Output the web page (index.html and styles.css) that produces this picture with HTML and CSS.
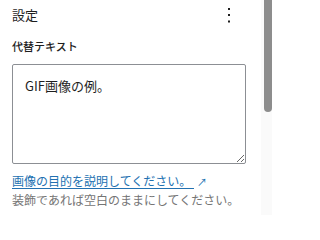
FILE: index.html
```html
<!DOCTYPE html>
<html lang="ja">
<head>
<meta charset="utf-8">
<link rel="stylesheet" href="styles.css">
</head>
<body>
<div class="frame">
  <div class="panel">
    <div class="panel-header">
      <h2 class="panel-title">設定</h2>
      <span class="menu-btn" aria-label="オプション">
        <svg width="4" height="16" viewBox="0 0 4 16"><rect x="1" y="1" width="2" height="2" fill="#1e1e1e"/><rect x="1" y="7" width="2" height="2" fill="#1e1e1e"/><rect x="1" y="13.5" width="2" height="2" fill="#1e1e1e"/></svg>
      </span>
    </div>
    <label class="field-label">代替テキスト</label>
    <textarea class="field-input">GIF画像の例。</textarea>
    <p class="help">
      <a class="help-link" href="#">画像の目的を説明してください。 </a><span class="ext">↗</span><br>
      <span class="help-text">装飾であれば空白のままにしてください。</span>
    </p>
  </div>
  <div class="scroll-track"><div class="scroll-thumb"></div></div>
</div>
</body>
</html>
```
FILE: styles.css
```css
html, body {
  margin: 0;
  padding: 0;
  background: #ffffff;
}
body {
  font-family: "Noto Sans CJK JP", "Noto Sans", sans-serif;
  color: #1e1e1e;
  width: 272px;
  height: 215px;
  overflow: hidden;
}
.frame {
  display: flex;
  height: 215px;
}
.panel {
  flex: 1;
  padding: 0 16px 0 12px;
  min-width: 0;
}
.panel-header {
  display: flex;
  justify-content: space-between;
  align-items: center;
  height: 30px;
}
.panel-title {
  margin: 0;
  font-size: 13px;
  font-weight: 400;
  line-height: 30px;
}
.menu-btn {
  display: flex;
  width: 4px;
  height: 16px;
  margin-right: 14px;
}
.field-label {
  display: block;
  margin-top: 8px;
  font-size: 11px;
  font-weight: 500;
  line-height: 16px;
}
.field-input {
  display: block;
  box-sizing: border-box;
  width: 234px;
  height: 100px;
  margin-top: 10px;
  padding: 11px 12px;
  border: 1px solid #8c8f94;
  border-radius: 2px;
  font-family: "Noto Sans CJK JP", "Noto Sans", sans-serif;
  font-size: 13px;
  line-height: 20px;
  color: #1e1e1e;
  resize: vertical;
  outline: none;
}
.help {
  margin: 8px 0 0;
  font-size: 12px;
  line-height: 18px;
}
.help-link {
  color: #2271b1;
  text-decoration: underline;
  text-underline-offset: 2px;
}
.ext {
  color: #2271b1;
  font-size: 10px;
  margin-left: 3px;
}
.help-text {
  color: #757575;
}
.scroll-track {
  width: 11px;
  height: 215px;
  background: #fafafa;
  display: flex;
  justify-content: flex-end;
}
.scroll-thumb {
  width: 8px;
  height: 112px;
  background: #8d8d8d;
  border-radius: 0 0 4px 4px;
}
```
